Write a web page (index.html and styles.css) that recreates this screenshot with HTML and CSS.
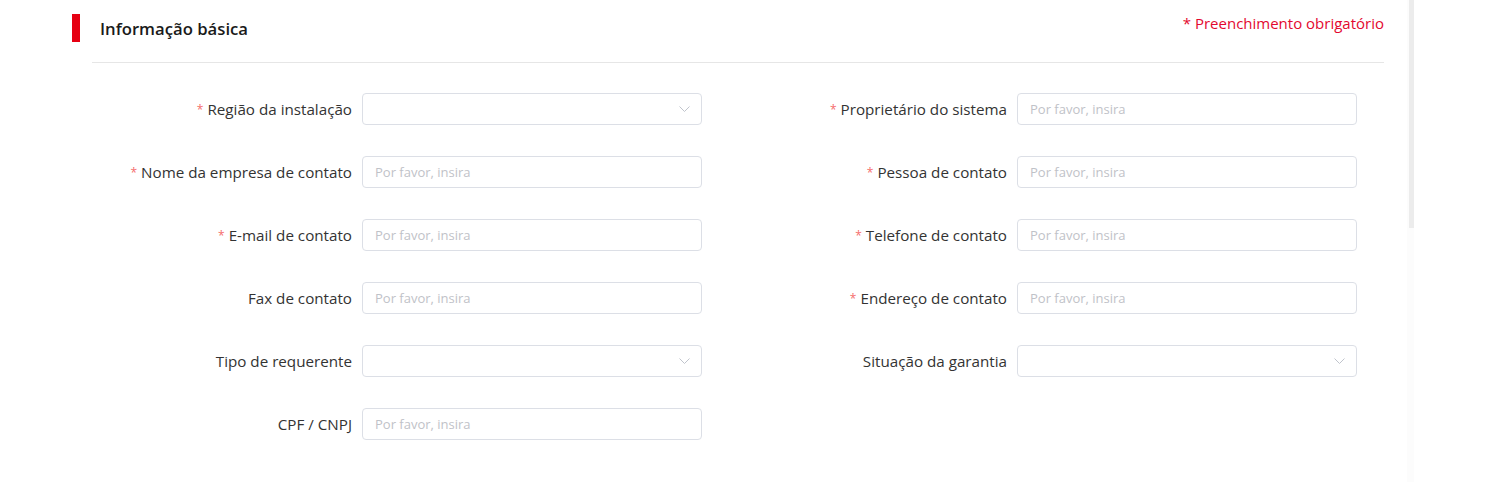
FILE: index.html
```html
<!DOCTYPE html>
<html lang="pt">
<head>
<meta charset="utf-8">
<link rel="stylesheet" href="styles.css">
</head>
<body>
<div class="page">
  <main class="main">
    <header class="section-head">
      <div class="title-wrap">
        <span class="title-bar"></span>
        <h2 class="title">Informação básica</h2>
      </div>
      <span class="required-note">* Preenchimento obrigatório</span>
    </header>
    <div class="divider"></div>
    <form class="form">
      <label class="label req">Região da instalação</label>
      <div class="field select"><span class="chev"><svg width="11" height="6" viewBox="0 0 11 6"><path d="M0.5 0.5 L5.5 5.5 L10.5 0.5" fill="none" stroke="#c0c4cc" stroke-width="1"/></svg></span></div>
      <span class="spacer"></span>
      <label class="label req">Proprietário do sistema</label>
      <div class="field"><span class="ph">Por favor, insira</span></div>

      <label class="label req">Nome da empresa de contato</label>
      <div class="field"><span class="ph">Por favor, insira</span></div>
      <span class="spacer"></span>
      <label class="label req">Pessoa de contato</label>
      <div class="field"><span class="ph">Por favor, insira</span></div>

      <label class="label req">E-mail de contato</label>
      <div class="field"><span class="ph">Por favor, insira</span></div>
      <span class="spacer"></span>
      <label class="label req">Telefone de contato</label>
      <div class="field"><span class="ph">Por favor, insira</span></div>

      <label class="label">Fax de contato</label>
      <div class="field"><span class="ph">Por favor, insira</span></div>
      <span class="spacer"></span>
      <label class="label req">Endereço de contato</label>
      <div class="field"><span class="ph">Por favor, insira</span></div>

      <label class="label">Tipo de requerente</label>
      <div class="field select"><span class="chev"><svg width="11" height="6" viewBox="0 0 11 6"><path d="M0.5 0.5 L5.5 5.5 L10.5 0.5" fill="none" stroke="#c0c4cc" stroke-width="1"/></svg></span></div>
      <span class="spacer"></span>
      <label class="label">Situação da garantia</label>
      <div class="field select"><span class="chev"><svg width="11" height="6" viewBox="0 0 11 6"><path d="M0.5 0.5 L5.5 5.5 L10.5 0.5" fill="none" stroke="#c0c4cc" stroke-width="1"/></svg></span></div>

      <label class="label">CPF / CNPJ</label>
      <div class="field"><span class="ph">Por favor, insira</span></div>
    </form>
  </main>
  <aside class="scroll-track"><div class="scroll-thumb"></div></aside>
</div>
</body>
</html>
```
FILE: styles.css
```css
* { box-sizing: border-box; }
html, body { margin: 0; padding: 0; background: #fff; }
body {
  font-family: "Open Sans", "Noto Sans", "Liberation Sans", sans-serif;
  color: #303133;
}
.page {
  display: flex;
  height: 482px;
}
.main {
  width: 1407px;
  padding: 14px 23px 0 72px;
}
.section-head {
  display: flex;
  justify-content: space-between;
  align-items: flex-start;
  height: 28px;
}
.title-wrap {
  display: flex;
  align-items: center;
  height: 28px;
}
.title-bar {
  width: 8px;
  height: 28px;
  background: #e60012;
}
.title {
  margin: 0 0 0 20px;
  font-size: 16.7px;
  font-weight: 600;
  color: #1a1a1a;
  line-height: 28px;
  position: relative;
  top: 1px;
}
.required-note {
  color: #e3082f;
  font-size: 15px;
  line-height: 18px;
}
.divider {
  height: 1px;
  background: #e6e6e6;
  margin: 20px 0 0 20px;
}
.form {
  display: grid;
  grid-template-columns: 270px 340px 45px 270px 340px;
  grid-auto-rows: 32px;
  row-gap: 31px;
  column-gap: 0;
  margin: 30px 0 0 20px;
}
.label {
  display: flex;
  align-items: center;
  justify-content: flex-end;
  padding-right: 10px;
  font-size: 15.2px;
  color: #333;
  white-space: nowrap;
}
.label.req::before {
  content: "*";
  color: #f56c6c;
  font-size: 12px;
  margin-right: 4px;
}
.field {
  border: 1px solid #dcdfe6;
  border-radius: 4px;
  display: flex;
  align-items: center;
  padding: 0 12px;
  background: #fff;
}
.select { justify-content: flex-end; }
.ph {
  font-size: 13px;
  color: #bfc2c8;
}
.chev { display: flex; margin-right: -1px; }
.scroll-track {
  width: 7px;
  background: #fcfcfc;
  display: flex;
  justify-content: flex-end;
}
.scroll-thumb {
  width: 5px;
  height: 228px;
  background: #ececec;
}
```
